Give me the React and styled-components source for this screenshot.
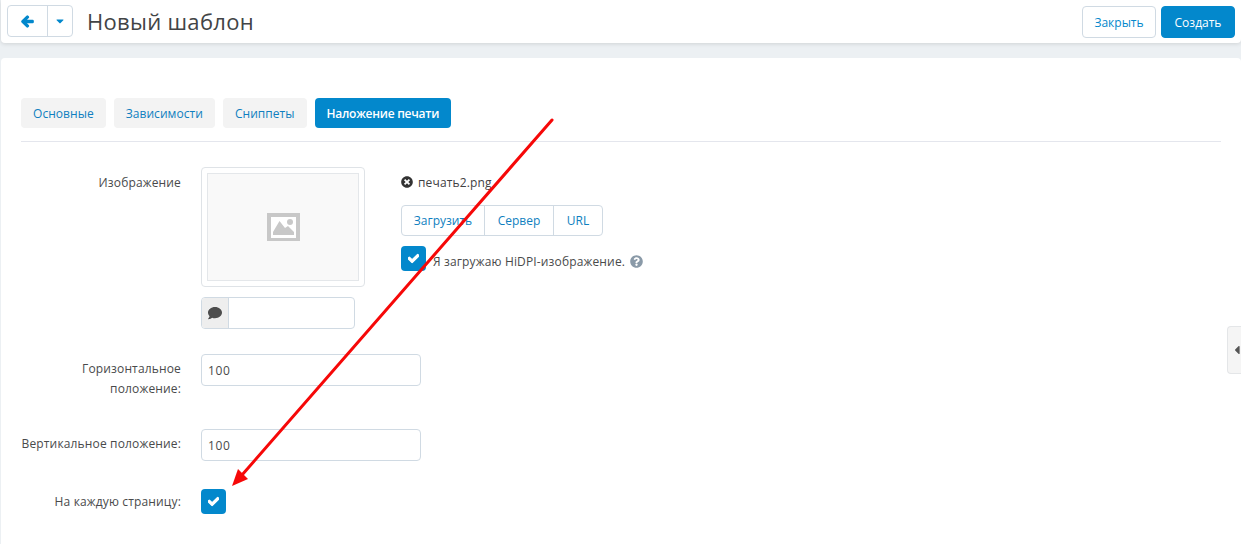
import React from "react";
import styled, { createGlobalStyle } from "styled-components";
import { FaArrowLeft, FaCaretDown, FaCheck, FaComment, FaTimesCircle, FaQuestionCircle, FaCaretLeft } from "react-icons/fa";

const GlobalStyle = createGlobalStyle`
  html, body {
    margin: 0;
    padding: 0;
    background: #ecf0f3;
    font-family: "Open Sans", sans-serif;
    font-size: 12px;
    letter-spacing: 0.15px;
    color: #494a4b;
  }
  * { box-sizing: border-box; }
`;

const Page = styled.div`
  position: relative;
  width: 1241px;
  height: 544px;
  overflow: hidden;
  padding-left: 1px;
`;

const Toolbar = styled.div`
  display: flex;
  align-items: flex-start;
  height: 43px;
  margin-bottom: 15px;
  padding: 5px 6px 0 6px;
  background: #fff;
  border-radius: 0 0 4px 4px;
  box-shadow: 0 1px 4px rgba(0, 0, 0, 0.12);
`;

const IconGroup = styled.div`
  display: flex;
  height: 32px;
  border: 1px solid #d0dae3;
  border-radius: 4px;
  color: #0388cc;
`;

const IconButton = styled.div`
  display: flex;
  align-items: center;
  justify-content: center;
  width: ${(p) => p.$width}px;
  font-size: ${(p) => p.$size}px;
  & + & { border-left: 1px solid #d0dae3; }
  svg { stroke: currentColor; stroke-width: ${(p) => p.$stroke || 0}; }
`;

const Title = styled.h1`
  margin: 0 0 0 14px;
  flex: 1;
  font-size: 22px;
  line-height: 32px;
  font-weight: 400;
  letter-spacing: 0.3px;
  color: #424446;
`;

const ActionButton = styled.button`
  width: 74px;
  height: 32px;
  margin: 1px 0 0 5px;
  padding: 0;
  font: 400 12px "Open Sans", sans-serif;
  border-radius: 4px;
  border: 1px solid ${(p) => (p.$primary ? "#0388cc" : "#d0dae3")};
  background: ${(p) => (p.$primary ? "#0388cc" : "#fff")};
  color: ${(p) => (p.$primary ? "#fff" : "#0388cc")};
`;

const Panel = styled.div`
  height: 486px;
  padding: 40px 20px 0 20px;
  background: #fff;
  border-radius: 4px 4px 0 0;
`;

const Tabs = styled.div`
  display: flex;
  gap: 8px;
  padding-bottom: 13px;
  border-bottom: 1px solid #e4e6ed;
  margin-bottom: 25px;
`;

const Tab = styled.div`
  height: 30px;
  padding: 0 12px;
  display: flex;
  align-items: center;
  border-radius: 4px;
  font-size: 12px;
  font-weight: ${(p) => (p.$active ? 600 : 400)};
  letter-spacing: ${(p) => (p.$active ? "-0.25px" : "0.05px")};
  background: ${(p) => (p.$active ? "#0388cc" : "#f3f3f3")};
  color: ${(p) => (p.$active ? "#fff" : "#0f7fc0")};
`;

const Row = styled.div`
  display: flex;
  align-items: flex-start;
  margin-bottom: ${(p) => p.$gap}px;
`;

const Label = styled.div`
  width: 160px;
  margin-right: 20px;
  padding-top: ${(p) => p.$top}px;
  text-align: right;
  font-size: 12px;
  line-height: 20px;
  color: #494a4b;
`;

const PreviewColumn = styled.div`
  width: 200px;
  flex: none;
`;

const Thumb = styled.div`
  width: 164px;
  height: 120px;
  padding: 5px;
  border: 1px solid #dfe3e7;
  border-radius: 4px;
  margin-bottom: 10px;
`;

const ThumbInner = styled.div`
  display: flex;
  align-items: center;
  justify-content: center;
  height: 100%;
  background: #f9f9f9;
  border: 1px solid #e4e7ea;
`;

const AltGroup = styled.div`
  display: flex;
  width: 154px;
  height: 32px;
  border: 1px solid #d0dae3;
  border-radius: 4px;
  overflow: hidden;
`;

const AltAddon = styled.div`
  width: 27px;
  display: flex;
  align-items: center;
  justify-content: center;
  background: #eeeeee;
  border-right: 1px solid #d0dae3;
  color: #4d4d4d;
  font-size: 14px;
`;

const FileColumn = styled.div`
  display: flex;
  flex-direction: column;
  align-items: flex-start;
  padding-top: 7px;
`;

const FileName = styled.div`
  display: flex;
  align-items: center;
  gap: 5px;
  height: 16px;
  margin-bottom: 15px;
  font-size: 12px;
  color: #3f4143;
  svg { color: #333; font-size: 12px; }
`;

const SourceGroup = styled.div`
  display: flex;
  height: 31px;
  margin-bottom: 10px;
  border: 1px solid #d0dae3;
  border-radius: 4px;
`;

const SourceButton = styled.div`
  display: flex;
  align-items: center;
  justify-content: center;
  width: ${(p) => p.$width}px;
  font-size: 12px;
  letter-spacing: 0;
  color: #0f7fc0;
  & + & { border-left: 1px solid #d0dae3; }
`;

const HiDpiRow = styled.div`
  display: flex;
  align-items: flex-start;
`;

const HiDpiText = styled.span`
  margin: 7px 0 0 7px;
  font-size: 12px;
  line-height: 18px;
  color: #494a4b;
  white-space: nowrap;
`;

const HelpIcon = styled.span`
  display: inline-flex;
  margin-left: 5px;
  vertical-align: -2px;
  color: #8a9aa8;
  font-size: 13px;
`;

const Checkbox = styled.div`
  width: 25px;
  height: 25px;
  display: flex;
  align-items: center;
  justify-content: center;
  background: #0388cc;
  border-radius: 4px;
  color: #fff;
  font-size: 11px;
  svg { stroke: currentColor; stroke-width: 50; }
`;

const NumberInput = styled.input`
  width: 220px;
  height: 32px;
  padding: 0 6px;
  border: 1px solid #d0dae3;
  border-radius: 4px;
  font: 400 12px "Open Sans", sans-serif;
  letter-spacing: 0.7px;
  color: #494a4b;
  background: #fff;
`;

const SideHandle = styled.div`
  position: absolute;
  top: 326px;
  right: 0;
  width: 14px;
  height: 48px;
  display: flex;
  align-items: center;
  padding-left: 5px;
  overflow: hidden;
  background: #f5f5f5;
  border: 1px solid #e4e6e8;
  border-right: none;
  border-radius: 4px 0 0 4px;
  color: #555;
  font-size: 14px;
`;

const ArrowLayer = styled.svg`
  position: absolute;
  top: 0;
  left: 0;
  pointer-events: none;
`;

const PlaceholderIcon = () => (
  <svg width="33" height="28" viewBox="0 0 33 28">
    <rect width="33" height="28" fill="#c8c8c8" />
    <rect x="4" y="4" width="25" height="21" fill="#fff" />
    <circle cx="23" cy="9" r="3" fill="#c8c8c8" />
    <path fill="#c8c8c8" d="M6 22v-3l6.500-11 5.500 7 3-2 6 6v3z" />
  </svg>
);

const App = () => {
  return (
    <Page>
      <GlobalStyle />
      <Toolbar>
        <IconGroup>
          <IconButton $width={39} $size={13} $stroke={50}><FaArrowLeft /></IconButton>
          <IconButton $width={25} $size={12}><FaCaretDown /></IconButton>
        </IconGroup>
        <Title>Новый шаблон</Title>
        <ActionButton>Закрыть</ActionButton>
        <ActionButton $primary>Создать</ActionButton>
      </Toolbar>
      <Panel>
        <Tabs>
          <Tab>Основные</Tab>
          <Tab>Зависимости</Tab>
          <Tab>Сниппеты</Tab>
          <Tab $active>Наложение печати</Tab>
        </Tabs>
        <Row $gap={25}>
          <Label $top={6}>Изображение</Label>
          <PreviewColumn>
            <Thumb>
              <ThumbInner><PlaceholderIcon /></ThumbInner>
            </Thumb>
            <AltGroup>
              <AltAddon><FaComment /></AltAddon>
            </AltGroup>
          </PreviewColumn>
          <FileColumn>
            <FileName><FaTimesCircle />печать2.png</FileName>
            <SourceGroup>
              <SourceButton $width={82}>Загрузить</SourceButton>
              <SourceButton $width={69}>Сервер</SourceButton>
              <SourceButton $width={49}>URL</SourceButton>
            </SourceGroup>
            <HiDpiRow>
              <Checkbox><FaCheck /></Checkbox>
              <HiDpiText>
                Я загружаю HiDPI-изображение.
                <HelpIcon><FaQuestionCircle /></HelpIcon>
              </HiDpiText>
            </HiDpiRow>
          </FileColumn>
        </Row>
        <Row $gap={30}>
          <Label $top={5}>Горизонтальное положение:</Label>
          <NumberInput defaultValue="100" />
        </Row>
        <Row $gap={28}>
          <Label $top={5}>Вертикальное положение:</Label>
          <NumberInput defaultValue="100" />
        </Row>
        <Row $gap={0}>
          <Label $top={3}>На каждую страницу:</Label>
          <Checkbox><FaCheck /></Checkbox>
        </Row>
      </Panel>
      <SideHandle><FaCaretLeft /></SideHandle>
      <ArrowLayer width="1241" height="544" viewBox="0 0 1241 544">
        <line x1="552" y1="120" x2="242" y2="475" stroke="#f60808" strokeWidth="3" strokeLinecap="round" />
        <polygon fill="#f60808" points="232,486 238,469 248,479" />
      </ArrowLayer>
    </Page>
  );
};

export default App;
